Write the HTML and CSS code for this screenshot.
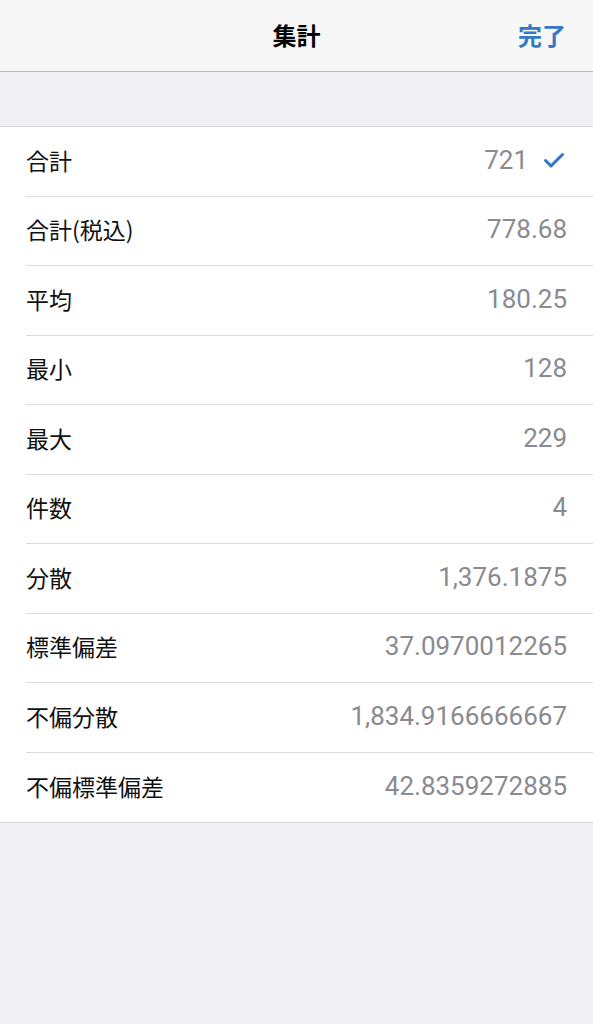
FILE: index.html
```html
<!DOCTYPE html>
<html lang="ja">
<head>
  <meta charset="UTF-8">
  <meta name="viewport" content="width=device-width, initial-scale=1.0">
  <title>集計</title>
  <link rel="stylesheet" href="styles.css">
</head>
<body>
  <header class="navbar">
    <div class="nav-side"></div>
    <h1 class="nav-title">集計</h1>
    <div class="nav-side nav-done">完了</div>
  </header>

  <div class="spacer"></div>

  <ul class="list">
    <li class="row">
      <span class="label">合計</span>
      <span class="value">721
        <svg class="check" width="22" height="18" viewBox="0 0 22 18"><path d="M2.5 9.5 L8 15 L19.5 3.5" fill="none" stroke="#2f74d0" stroke-width="3" stroke-linecap="round" stroke-linejoin="round"/></svg>
      </span>
    </li>
    <li class="row"><span class="label">合計(税込)</span><span class="value">778.68</span></li>
    <li class="row"><span class="label">平均</span><span class="value">180.25</span></li>
    <li class="row"><span class="label">最小</span><span class="value">128</span></li>
    <li class="row"><span class="label">最大</span><span class="value">229</span></li>
    <li class="row"><span class="label">件数</span><span class="value">4</span></li>
    <li class="row"><span class="label">分散</span><span class="value">1,376.1875</span></li>
    <li class="row"><span class="label">標準偏差</span><span class="value">37.0970012265</span></li>
    <li class="row"><span class="label">不偏分散</span><span class="value">1,834.9166666667</span></li>
    <li class="row"><span class="label">不偏標準偏差</span><span class="value">42.8359272885</span></li>
  </ul>
</body>
</html>
```

FILE: styles.css
```css
* {
  margin: 0;
  padding: 0;
  box-sizing: border-box;
}
html, body {
  width: 100%;
  height: 100%;
  background: #efeff4;
  font-family: 'Noto Sans CJK JP', sans-serif;
  overflow: hidden;
}
.navbar {
  height: 72px;
  background: #f7f7f8;
  border-bottom: 1px solid #b9b9bd;
  display: flex;
  align-items: center;
  justify-content: space-between;
  padding: 0 27px 2px 27px;
}
.nav-side {
  width: 80px;
}
.nav-title {
  font-size: 24px;
  font-weight: 700;
  color: #000;
}
.nav-done {
  text-align: right;
  font-size: 24px;
  font-weight: 700;
  color: #3478c6;
}
.spacer {
  height: 55px;
  border-bottom: 1px solid #d3d3d7;
}
.list {
  list-style: none;
  background: #fff;
  padding-left: 26px;
  border-bottom: 1px solid #d3d3d7;
}
.row {
  height: 69.5px;
  display: flex;
  align-items: center;
  justify-content: space-between;
  padding: 0 26px 3px 0;
  border-bottom: 1px solid #dcdce0;
}
.row:last-child {
  border-bottom: none;
}
.label {
  font-size: 23px;
  color: #111;
}
.value {
  display: flex;
  align-items: center;
  font-family: Roboto, 'Liberation Sans', sans-serif;
  font-size: 26px;
  color: #8a8a8f;
}
.check {
  margin-left: 15px;
  margin-right: 2px;
}
```
